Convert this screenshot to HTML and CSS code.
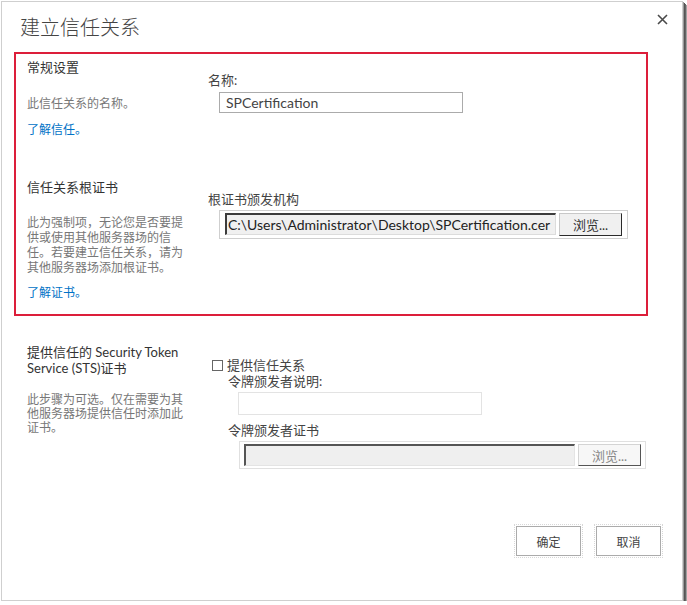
FILE: index.html
```html
<!DOCTYPE html>
<html lang="zh-CN">
<head>
<meta charset="utf-8">
<title>建立信任关系</title>
<link rel="stylesheet" href="styles.css">
</head>
<body>
<div class="dialog">
  <div class="titlebar">
    <h1 class="title">建立信任关系</h1>
    <button class="close" type="button" aria-label="关闭">
      <svg width="11" height="11" viewBox="0 0 11 11"><path d="M1 1L10 10M10 1L1 10" stroke="#4a4a4a" stroke-width="1.6" fill="none"/></svg>
    </button>
  </div>

  <div class="highlight">
    <section class="sec sec-general">
      <div class="sec-left">
        <h2 class="heading">常规设置</h2>
        <p class="desc">此信任关系的名称。</p>
        <a class="link" href="#">了解信任。</a>
      </div>
      <div class="sec-right">
        <label class="field-label">名称:</label>
        <input class="text-input" type="text" value="SPCertification">
      </div>
    </section>

    <section class="sec sec-root">
      <div class="sec-left">
        <h2 class="heading">信任关系根证书</h2>
        <p class="desc">此为强制项，无论您是否要提供或使用其他服务器场的信任。若要建立信任关系，请为其他服务器场添加根证书。</p>
        <a class="link" href="#">了解证书。</a>
      </div>
      <div class="sec-right">
        <label class="field-label">根证书颁发机构</label>
        <div class="file">
          <input class="path" type="text" value="C:\Users\Administrator\Desktop\SPCertification.cer" readonly>
          <button class="browse" type="button">浏览...</button>
        </div>
      </div>
    </section>
  </div>

  <section class="sec sec-sts">
    <div class="sec-left">
      <h2 class="heading heading-sts">提供信任的 Security Token Service (STS)证书</h2>
      <p class="desc desc-sts">此步骤为可选。仅在需要为其他服务器场提供信任时添加此证书。</p>
    </div>
    <div class="sec-right">
      <label class="check-row"><input class="check" type="checkbox"><span>提供信任关系</span></label>
      <div class="sub">
        <label class="field-label sub-label">令牌颁发者说明:</label>
        <input class="text-input disabled-input" type="text" disabled>
        <label class="field-label sub-label sub-label-2">令牌颁发者证书</label>
        <div class="file file-disabled">
          <input class="path" type="text" value="" disabled>
          <button class="browse" type="button" disabled>浏览...</button>
        </div>
      </div>
    </div>
  </section>

  <div class="actions">
    <button class="action" type="button">确定</button>
    <button class="action" type="button">取消</button>
  </div>
</div>
</body>
</html>
```

FILE: styles.css
```css
html, body {
  margin: 0;
  padding: 0;
  background: #fff;
}

body {
  font-family: "Segoe UI", Lato, "Noto Sans CJK SC", sans-serif;
  color: #444;
}

.dialog {
  box-sizing: border-box;
  width: 682px;
  height: 600px;
  margin: 1px 0 0 1px;
  border: 1px solid #cfcfcf;
  background: #fff;
  box-shadow: 1px 1px 0 #9a9a9a, 2px 2px 0 #555, 3px 3px 0 #666, 4px 4px 0 #a0a0a0;
}

.titlebar {
  box-sizing: border-box;
  height: 50px;
  display: flex;
  justify-content: space-between;
  align-items: flex-start;
  padding: 11px 14px 0 18px;
}

.title {
  margin: 0;
  font-size: 20px;
  line-height: 28px;
  font-weight: 300;
  color: #444;
}

.close {
  margin: 1px 0 0 0;
  padding: 0;
  width: 11px;
  height: 11px;
  border: 0;
  background: none;
  display: block;
}

.close svg {
  display: block;
}

.highlight {
  margin: 0 34px 0 12px;
  border: 2px solid #dc1e3a;
  padding: 0 0 0 11px;
}

.sec {
  display: flex;
}

.sec-left {
  width: 181px;
  flex: none;
}

.sec-right {
  flex: 1;
}

.heading {
  margin: 0;
  font-size: 13px;
  line-height: 18px;
  font-weight: normal;
  color: #333;
}

.desc {
  margin: 0;
  width: 157px;
  font-size: 12px;
  line-height: 15px;
  color: #777;
}

.link {
  display: block;
  font-size: 12px;
  line-height: 16px;
  color: #0072c6;
  text-decoration: none;
}

.field-label {
  display: block;
  font-size: 13px;
  line-height: 18px;
  color: #444;
}

.text-input {
  display: block;
  box-sizing: border-box;
  margin: 3px 0 0 11px;
  width: 244px;
  height: 21px;
  border: 1px solid #ababab;
  padding: 0 6px;
  font-family: inherit;
  font-size: 14px;
  color: #444;
  background: #fff;
  outline: none;
}

/* section 1 */
.sec-general {
  padding-bottom: 40px;
}

.sec-general .heading {
  margin-top: 4px;
}

.sec-general .desc {
  margin-top: 20px;
}

.sec-general .link {
  margin-top: 11px;
}

.sec-general .sec-right {
  padding-top: 17px;
}

/* section 2 */
.sec-root {
  padding-bottom: 13px;
}

.sec-root .desc {
  margin-top: 19px;
}

.sec-root .link {
  margin-top: 10px;
}

.sec-root .sec-right {
  padding-top: 12px;
}

.file {
  box-sizing: border-box;
  display: flex;
  align-items: flex-start;
  gap: 3px;
  margin: 2px 0 0 11px;
  width: 409px;
  height: 29px;
  border: 1px solid #cfcfcf;
  padding: 2px 5px;
}

.path {
  box-sizing: border-box;
  width: 331px;
  height: 22px;
  margin: 0;
  border-style: solid;
  border-width: 2px 1px 1px 2px;
  border-color: #3c3c3c #dcdcdc #dcdcdc #3c3c3c;
  background: #f0f0f0;
  padding: 0 1px;
  font-family: inherit;
  font-size: 14px;
  color: #222;
  outline: none;
}

.browse {
  box-sizing: border-box;
  width: 63px;
  height: 23px;
  margin: 0;
  padding: 0;
  border: 1px solid;
  border-color: #c8c8c8 #2a2a2a #2a2a2a #c8c8c8;
  background: #f0f0f0;
  font-family: inherit;
  font-size: 13px;
  color: #333;
}

/* section 3 */
.sec-sts {
  margin-left: 25px;
}

.heading-sts {
  margin-top: 28px;
  width: 175px;
  line-height: 16px;
}

.desc-sts {
  margin-top: 17px;
  line-height: 14px;
}

.sec-sts .sec-right {
  padding-top: 41px;
}

.check-row {
  display: flex;
  align-items: center;
  height: 16px;
  font-size: 13px;
  line-height: 16px;
  color: #444;
}

.check {
  appearance: none;
  -webkit-appearance: none;
  box-sizing: border-box;
  width: 11px;
  height: 11px;
  margin: 0 4px 0 4px;
  border: 1px solid #666;
  background: #fff;
}

.sub {
  margin-left: 20px;
}

.sub-label {
  line-height: 16px;
}

.sub-label-2 {
  margin-top: 7px;
}

.disabled-input {
  margin: 3px 0 0 10px;
  height: 23px;
  border-color: #e3e3e3;
  background: #fff;
}

.file-disabled {
  margin: 3px 0 0 11px;
  width: 407px;
  height: 28px;
  padding: 2px 4px;
  border-color: #e0e0e0;
}

.file-disabled .path {
  border-color: #555 #e4e4e4 #e4e4e4 #555;
  background: #efefef;
}

.file-disabled .browse {
  height: 22px;
  border-color: #d4d4d4 #555 #555 #d4d4d4;
  background: #f7f7f7;
  color: #888;
}

/* actions */
.actions {
  display: flex;
  justify-content: flex-end;
  gap: 15px;
  margin-top: 57px;
  padding-right: 21px;
}

.action {
  box-sizing: border-box;
  width: 65px;
  height: 30px;
  margin: 0;
  padding: 0;
  border: 1px solid #ababab;
  background: #fff;
  font-family: inherit;
  font-size: 12px;
  color: #444;
  outline: 1px dotted #d8d8d8;
  outline-offset: 1px;
}
```
